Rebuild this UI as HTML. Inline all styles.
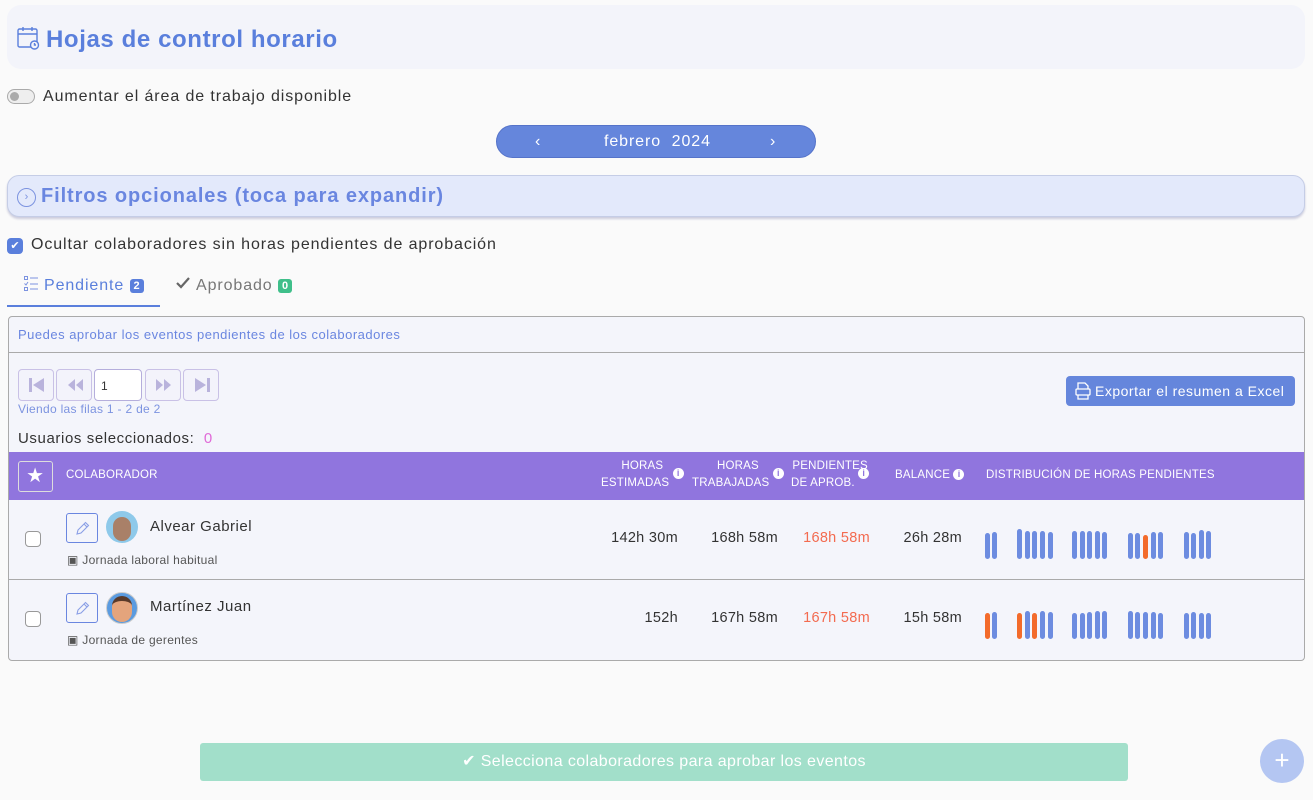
<!DOCTYPE html>
<html><head><meta charset="utf-8"><style>
*{box-sizing:border-box;margin:0;padding:0}
body{width:1313px;height:800px;background:#fafafa;font-family:"Liberation Sans",sans-serif;color:#333;position:relative;overflow:hidden;letter-spacing:0.9px}
.abs{position:absolute}
.hdr{left:7px;top:5px;width:1298px;height:64px;background:#f3f4fa;border-radius:14px}
.hdr h1{position:absolute;left:39px;top:21px;font-size:24px;font-weight:bold;color:#5a7fdc;letter-spacing:0.6px}
.bar{background:#6d8ce0;border-radius:3px;width:5px;position:absolute;bottom:0}
.orange{background:#f36b2b}
.hcol{color:#fff;font-size:11.5px;text-align:center;line-height:17px;letter-spacing:0.2px}
.info{display:inline-block;width:11px;height:11px;border-radius:50%;background:#fff;color:#9075de;font-size:9px;line-height:11px;text-align:center;font-weight:bold;vertical-align:middle;letter-spacing:0}
.num{font-size:14.5px;color:#333;text-align:right;letter-spacing:0.3px}
.pg{width:36px;height:32px;border:1px solid #c9c1e6;border-radius:4px;background:#f3f3fb}
.pg svg{position:absolute;left:8px;top:7px}
</style></head><body>
<div class="abs hdr">
<svg class="abs" style="left:10px;top:21px" width="24" height="24" viewBox="0 0 24 24" fill="none" stroke="#5a7fdc" stroke-width="1.4"><rect x="1" y="3" width="19" height="18" rx="1.5"/><line x1="1" y1="8" x2="20" y2="8"/><line x1="6" y1="1" x2="6" y2="5"/><line x1="15" y1="1" x2="15" y2="5"/><circle cx="17.5" cy="19" r="4" fill="#f3f4fa"/><path d="M17.5 17v2h1.5"/></svg>
<h1>Hojas de control horario</h1></div>
<div class="abs" style="left:7px;top:89px;width:28px;height:15px;border:1px solid #aaa;border-radius:8px;background:#eee"><div style="position:absolute;left:2px;top:2px;width:9px;height:9px;border-radius:50%;background:#aaa"></div></div>
<div class="abs" style="left:43px;top:88px;font-size:16px;color:#333">Aumentar el área de trabajo disponible</div>
<div class="abs" style="left:496px;top:125px;width:320px;height:33px;background:#6586dc;border-radius:17px;border:1px solid #5573c9;color:#fff;font-size:16px;line-height:31px">
<span class="abs" style="left:38px">‹</span><span class="abs" style="left:107px">febrero&nbsp; 2024</span><span class="abs" style="left:273px">›</span></div>
<div class="abs" style="left:7px;top:175px;width:1298px;height:42px;background:#e3e9fb;border:1px solid #c5cde6;border-radius:12px;box-shadow:0 2px 2px #ccd">
<div class="abs" style="left:9px;top:12px;width:19px;height:19px;border:1px solid #7c93e0;border-radius:50%;color:#7c93e0;font-size:11px;text-align:center;line-height:17px;letter-spacing:0">›</div>
<div class="abs" style="left:33px;top:9px;font-size:20px;font-weight:bold;color:#6a86e0;letter-spacing:0.9px">Filtros opcionales (toca para expandir)</div></div>
<div class="abs" style="left:7px;top:238px;width:16px;height:16px;background:#5a7fdc;border-radius:4px;color:#fff;font-size:11px;text-align:center;line-height:16px;letter-spacing:0">✔</div>
<div class="abs" style="left:31px;top:236px;font-size:16px">Ocultar colaboradores sin horas pendientes de aprobación</div>
<svg class="abs" style="left:24px;top:276px" width="14" height="16" viewBox="0 0 14 16" fill="none" stroke="#7c93e0" stroke-width="1"><rect x="0.5" y="0.5" width="3" height="3"/><rect x="0.5" y="11.5" width="3" height="3"/><path d="M0.5 7.5l1.5 1.5 2-3M6 2h8M6 8h8M6 13h8"/></svg>
<div class="abs" style="left:44px;top:277px;font-size:16px;color:#5a7fdc">Pendiente <span style="display:inline-block;background:#5a7fdc;color:#fff;font-size:11px;font-weight:bold;padding:1px 4px;border-radius:3px;vertical-align:middle;letter-spacing:0">2</span></div>
<div class="abs" style="left:7px;top:305px;width:153px;height:2px;background:#5a7fdc"></div>
<svg class="abs" style="left:176px;top:277px" width="14" height="12" viewBox="0 0 14 12" fill="none" stroke="#666" stroke-width="2.2"><path d="M1 6l4 4 8-9"/></svg>
<div class="abs" style="left:196px;top:277px;font-size:16px;color:#777">Aprobado <span style="display:inline-block;background:#3fbf8a;color:#fff;font-size:11px;font-weight:bold;padding:1px 4px;border-radius:3px;vertical-align:middle;letter-spacing:0">0</span></div>
<div class="abs" style="left:8px;top:316px;width:1297px;height:345px;border:1px solid #aaa;border-radius:4px;background:#f4f5fb;overflow:hidden">
<div class="abs" style="left:9px;top:10px;font-size:13px;color:#6a86e0;letter-spacing:0.5px">Puedes aprobar los eventos pendientes de los colaboradores</div>
<div class="abs" style="left:0;top:35px;width:100%;height:1px;background:#aaa"></div>
<div class="abs pg" style="left:9px;top:52px"><svg width="20" height="16" viewBox="0 0 20 16" fill="#b9b3dc"><rect x="2" y="1" width="3" height="14"/><path d="M17 1v14L6 8z"/></svg></div>
<div class="abs pg" style="left:47px;top:52px"><svg width="20" height="16" viewBox="0 0 20 16" fill="#b9b3dc"><path d="M10 2v12L3 8zM18 2v12L11 8z"/></svg></div>
<div class="abs" style="left:85px;top:52px;width:48px;height:32px;border:1px solid #b5aedc;border-radius:4px;background:#fff;font-size:12px;padding:9px 6px">1</div>
<div class="abs pg" style="left:136px;top:52px"><svg width="20" height="16" viewBox="0 0 20 16" fill="#b9b3dc"><path d="M2 2v12l7-6zM10 2v12l7-6z"/></svg></div>
<div class="abs pg" style="left:174px;top:52px"><svg width="20" height="16" viewBox="0 0 20 16" fill="#b9b3dc"><path d="M3 1v14l11-7z"/><rect x="15" y="1" width="3" height="14"/></svg></div>
<div class="abs" style="left:9px;top:85px;font-size:12px;color:#7c93e0;letter-spacing:0.3px">Viendo las filas 1 - 2 de 2</div>
<div class="abs" style="left:1057px;top:59px;width:229px;height:30px;background:#6586dc;border-radius:4px;color:#fff;font-size:14px;line-height:30px;padding-left:29px;letter-spacing:0.5px">Exportar el resumen a Excel
<svg class="abs" style="left:9px;top:6px" width="16" height="18" viewBox="0 0 16 18" fill="none" stroke="#fff" stroke-width="1.3"><path d="M3 7V1h7l3 3v3"/><rect x="1" y="7" width="14" height="6" rx="1"/><path d="M3 13v4h10v-4"/></svg></div>
<div class="abs" style="left:9px;top:113px;font-size:15px;letter-spacing:0.6px">Usuarios seleccionados:&nbsp; <span style="color:#e06ad8">0</span></div>
<div class="abs" style="left:0;top:135px;width:100%;height:48px;background:#9075de">
<div class="abs" style="left:9px;top:9px;width:35px;height:31px;border:1px solid #ddd;border-radius:3px;color:#fff;font-size:20px;text-align:center;line-height:29px">★</div>
<div class="abs hcol" style="left:57px;top:15px">COLABORADOR</div>
<div class="abs hcol" style="left:592px;top:6px">HORAS<br>ESTIMADAS <span class="info" style="margin-top:-18px">i</span></div>
<div class="abs hcol" style="left:683px;top:6px">HORAS<br>TRABAJADAS <span class="info" style="margin-top:-18px">i</span></div>
<div class="abs hcol" style="left:782px;top:6px">PENDIENTES<br>DE APROB. <span class="info" style="margin-top:-18px">i</span></div>
<div class="abs hcol" style="left:886px;top:15px">BALANCE <span class="info">i</span></div>
<div class="abs hcol" style="left:977px;top:15px">DISTRIBUCIÓN DE HORAS PENDIENTES</div>
</div>
<div class="abs" style="left:0;top:262px;width:100%;height:1px;background:#aaa"></div>
</div>
<div class="abs" style="left:25px;top:531px;width:16px;height:16px;border:1px solid #999;border-radius:4px;background:#fff"></div>
<div class="abs" style="left:25px;top:611px;width:16px;height:16px;border:1px solid #999;border-radius:4px;background:#fff"></div>
<div class="abs" style="left:66px;top:513px;width:32px;height:30px;border:1px solid #6a86e0;border-radius:3px"><svg class="abs" style="left:8px;top:7px" width="15" height="15" viewBox="0 0 15 15" fill="none" stroke="#8a9fe6" stroke-width="1.1"><path d="M2 13l1-4 7.5-7.5 3 3L6 12zM9 3l3 3"/></svg></div>
<div class="abs" style="left:66px;top:593px;width:32px;height:30px;border:1px solid #6a86e0;border-radius:3px"><svg class="abs" style="left:8px;top:7px" width="15" height="15" viewBox="0 0 15 15" fill="none" stroke="#8a9fe6" stroke-width="1.1"><path d="M2 13l1-4 7.5-7.5 3 3L6 12zM9 3l3 3"/></svg></div>
<div class="abs" style="left:106px;top:511px;width:32px;height:32px;border-radius:50%;background:#8ec9ea;overflow:hidden"><div style="margin:6px auto 0;width:18px;height:24px;border-radius:9px;background:#a98068"></div></div>
<div class="abs" style="left:106px;top:592px;width:32px;height:32px;border-radius:50%;background:#5b9be0;border:1px solid #ccc;overflow:hidden"><div style="margin:3px auto 0;width:20px;height:26px;border-radius:10px;background:#e4a47c;border-top:5px solid #5a3a2a"></div></div>
<div class="abs" style="left:150px;top:518px;font-size:15px;letter-spacing:0.5px">Alvear Gabriel</div>
<div class="abs" style="left:150px;top:598px;font-size:15px;letter-spacing:0.5px">Martínez Juan</div>
<div class="abs" style="left:67px;top:553px;font-size:12px;color:#555;letter-spacing:0.3px">▣ Jornada laboral habitual</div>
<div class="abs" style="left:67px;top:633px;font-size:12px;color:#555;letter-spacing:0.3px">▣ Jornada de gerentes</div>
<div class="abs num" style="left:580px;top:530px;width:98px">142h 30m</div>
<div class="abs num" style="left:680px;top:530px;width:98px">168h 58m</div>
<div class="abs num" style="left:770px;top:530px;width:100px;color:#f36b50">168h 58m</div>
<div class="abs num" style="left:862px;top:530px;width:100px">26h 28m</div>
<div class="abs num" style="left:580px;top:610px;width:98px">152h</div>
<div class="abs num" style="left:680px;top:610px;width:98px">167h 58m</div>
<div class="abs num" style="left:770px;top:610px;width:100px;color:#f36b50">167h 58m</div>
<div class="abs num" style="left:862px;top:610px;width:100px">15h 58m</div>
<div class="abs" style="left:0;top:528px;width:1313px;height:31px">
<div class="bar" style="left:985px;height:26px"></div><div class="bar" style="left:992px;height:27px"></div>
<div class="bar" style="left:1017px;height:30px"></div><div class="bar" style="left:1025px;height:28px"></div><div class="bar" style="left:1032px;height:28px"></div><div class="bar" style="left:1040px;height:28px"></div><div class="bar" style="left:1048px;height:27px"></div>
<div class="bar" style="left:1072px;height:28px"></div><div class="bar" style="left:1080px;height:28px"></div><div class="bar" style="left:1087px;height:28px"></div><div class="bar" style="left:1095px;height:28px"></div><div class="bar" style="left:1102px;height:27px"></div>
<div class="bar" style="left:1128px;height:26px"></div><div class="bar" style="left:1135px;height:26px"></div><div class="bar orange" style="left:1143px;height:24px"></div><div class="bar" style="left:1151px;height:27px"></div><div class="bar" style="left:1158px;height:27px"></div>
<div class="bar" style="left:1184px;height:27px"></div><div class="bar" style="left:1191px;height:26px"></div><div class="bar" style="left:1199px;height:29px"></div><div class="bar" style="left:1206px;height:28px"></div>
</div>
<div class="abs" style="left:0;top:608px;width:1313px;height:31px">
<div class="bar orange" style="left:985px;height:26px"></div><div class="bar" style="left:992px;height:27px"></div>
<div class="bar orange" style="left:1017px;height:26px"></div><div class="bar" style="left:1025px;height:28px"></div><div class="bar orange" style="left:1032px;height:26px"></div><div class="bar" style="left:1040px;height:28px"></div><div class="bar" style="left:1048px;height:27px"></div>
<div class="bar" style="left:1072px;height:26px"></div><div class="bar" style="left:1080px;height:26px"></div><div class="bar" style="left:1087px;height:27px"></div><div class="bar" style="left:1095px;height:28px"></div><div class="bar" style="left:1102px;height:28px"></div>
<div class="bar" style="left:1128px;height:28px"></div><div class="bar" style="left:1135px;height:27px"></div><div class="bar" style="left:1143px;height:27px"></div><div class="bar" style="left:1151px;height:27px"></div><div class="bar" style="left:1158px;height:26px"></div>
<div class="bar" style="left:1184px;height:26px"></div><div class="bar" style="left:1191px;height:27px"></div><div class="bar" style="left:1199px;height:26px"></div><div class="bar" style="left:1206px;height:26px"></div>
</div>
<div class="abs" style="left:200px;top:743px;width:928px;height:38px;background:#a2dfca;border-radius:3px;color:#fff;font-size:16px;text-align:center;line-height:38px;letter-spacing:0.4px">✔ Selecciona colaboradores para aprobar los eventos</div>
<div class="abs" style="left:1260px;top:739px;width:44px;height:44px;border-radius:50%;background:#b4c6f2;color:#fff;font-size:26px;text-align:center;line-height:42px;letter-spacing:0">+</div>
</body></html>
